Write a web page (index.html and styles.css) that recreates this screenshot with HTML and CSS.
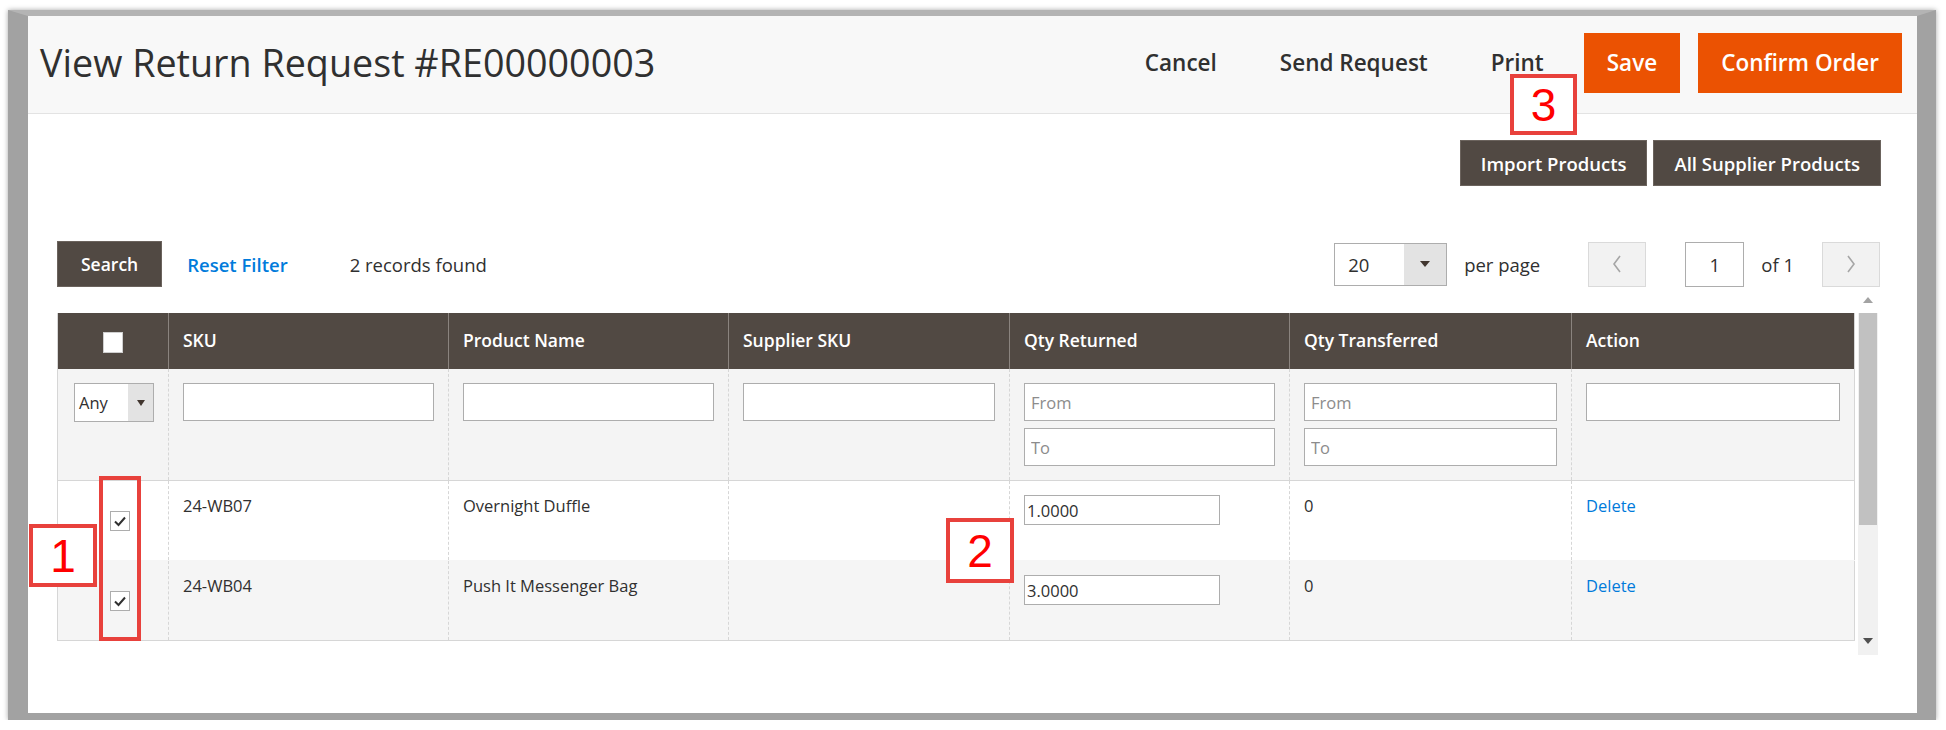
FILE: index.html
```html
<!DOCTYPE html>
<html lang="en">
<head>
<meta charset="utf-8">
<title>View Return Request</title>
<link rel="stylesheet" href="styles.css">
</head>
<body>
<div class="frame">
  <div class="page">
    <header class="page-header">
      <h1 class="page-title">View Return Request #RE00000003</h1>
      <div class="page-actions">
        <button class="act-link">Cancel</button>
        <button class="act-link">Send Request</button>
        <button class="act-link">Print</button>
        <button class="act-primary save">Save</button>
        <button class="act-primary confirm">Confirm Order</button>
      </div>
    </header>

    <div class="content">
      <div class="top-actions">
        <button class="act-dark">Import Products</button>
        <button class="act-dark">All Supplier Products</button>
      </div>

      <div class="grid-toolbar">
        <div class="toolbar-left">
          <button class="act-dark search">Search</button>
          <a class="reset-link">Reset Filter</a>
          <span class="records">2 records found</span>
        </div>
        <div class="pager">
          <div class="per-page-select"><span class="sel-val">20</span><span class="sel-btn"><i class="tri-down"></i></span></div>
          <span class="pager-label">per page</span>
          <button class="pager-btn prev"><svg width="12" height="20" viewBox="0 0 12 20"><polyline points="9,2 3,10 9,18" fill="none" stroke="#a6a6a6" stroke-width="1.6"/></svg></button>
          <div class="page-input">1</div>
          <span class="pager-label of">of 1</span>
          <button class="pager-btn next"><svg width="12" height="20" viewBox="0 0 12 20"><polyline points="3,2 9,10 3,18" fill="none" stroke="#a6a6a6" stroke-width="1.6"/></svg></button>
        </div>
      </div>

      <div class="grid-scroll">
        <div class="grid-wrap">
          <table class="grid">
            <colgroup>
              <col class="c-cb"><col class="c-std"><col class="c-std"><col class="c-w281"><col class="c-std"><col class="c-w282"><col class="c-w283">
            </colgroup>
            <thead>
              <tr class="head-row">
                <th class="th-cb"><span class="head-check"></span></th>
                <th>SKU</th>
                <th>Product Name</th>
                <th>Supplier SKU</th>
                <th>Qty Returned</th>
                <th>Qty Transferred</th>
                <th>Action</th>
              </tr>
              <tr class="filter-row">
                <td class="f-cb"><div class="any-select"><span class="sel-val">Any</span><span class="sel-btn"><i class="tri-down"></i></span></div></td>
                <td><input class="f-input" type="text"></td>
                <td><input class="f-input" type="text"></td>
                <td><input class="f-input" type="text"></td>
                <td><input class="f-input" type="text" placeholder="From"><input class="f-input to" type="text" placeholder="To"></td>
                <td><input class="f-input" type="text" placeholder="From"><input class="f-input to" type="text" placeholder="To"></td>
                <td><input class="f-input" type="text"></td>
              </tr>
            </thead>
            <tbody>
              <tr class="data-row">
                <td class="d-cb"><span class="row-check"><svg width="18" height="18" viewBox="0 0 18 18"><polyline points="4,9.5 7.5,13 14,5.5" fill="none" stroke="#303030" stroke-width="2"/></svg></span></td>
                <td>24-WB07</td>
                <td>Overnight Duffle</td>
                <td></td>
                <td><input class="qty-input" type="text" value="1.0000"></td>
                <td>0</td>
                <td><a class="del-link">Delete</a></td>
              </tr>
              <tr class="data-row alt">
                <td class="d-cb"><span class="row-check"><svg width="18" height="18" viewBox="0 0 18 18"><polyline points="4,9.5 7.5,13 14,5.5" fill="none" stroke="#303030" stroke-width="2"/></svg></span></td>
                <td>24-WB04</td>
                <td>Push It Messenger Bag</td>
                <td></td>
                <td><input class="qty-input" type="text" value="3.0000"></td>
                <td>0</td>
                <td><a class="del-link">Delete</a></td>
              </tr>
            </tbody>
          </table>
        </div>
        <div class="vscroll">
          <div class="sb-top"><i class="tri-up"></i></div>
          <div class="sb-thumb"></div>
          <div class="sb-rest"><i class="tri-down dark"></i></div>
        </div>
      </div>
    </div>

    <div class="note note-3">3</div>
    <div class="note note-2">2</div>
    <div class="note note-1">1</div>
    <div class="note note-tall"></div>
  </div>
</div>
</body>
</html>
```
FILE: styles.css
```css
* { box-sizing: border-box; }

body {
  margin: 0;
  background: #ffffff;
  font-family: "Open Sans", "DejaVu Sans", sans-serif;
  color: #303030;
}

.frame {
  margin: 10px 0 0 8px;
  width: 1928px;
  height: 710px;
  border-style: solid;
  border-color: #a2a2a2;
  border-top-color: #b4b4b4;
  border-width: 6px 19px 7px 20px;
  box-shadow: 0 0 5px rgba(0, 0, 0, 0.35);
}

.page {
  position: relative;
  height: 100%;
  background: #ffffff;
}

/* ---------- header ---------- */
.page-header {
  height: 98px;
  display: flex;
  align-items: center;
  justify-content: space-between;
  padding: 0 15px 4px 12px;
  background: #f8f8f8;
  border-bottom: 1px solid #e3e3e3;
}

.page-title {
  margin: 0;
  font-size: 37.7px;
  font-weight: 400;
  line-height: 1.2;
  color: #303030;
}

.page-actions {
  display: flex;
  align-items: center;
}

.act-link {
  font-family: "Open Sans", sans-serif;
  font-size: 22.5px;
  font-weight: 600;
  color: #303030;
  background: none;
  border: 0;
  padding: 0;
}

.act-link + .act-link { margin-left: 63px; }

.act-primary {
  height: 60px;
  padding: 0 22px;
  font-family: "Open Sans", sans-serif;
  font-size: 22.5px;
  font-weight: 600;
  color: #ffffff;
  background: #eb5202;
  border: 1px solid #eb5202;
}

.save { margin-left: 40px; padding: 0 22px; }
.confirm { margin-left: 18px; }

/* ---------- content ---------- */
.content {
  padding: 0 36px 0 29px;
}

.top-actions {
  display: flex;
  justify-content: flex-end;
  gap: 6px;
  margin-top: 26px;
}

.act-dark {
  height: 46px;
  padding: 0 20px;
  font-family: "Open Sans", sans-serif;
  font-size: 18.5px;
  font-weight: 600;
  color: #ffffff;
  background: #514943;
  border: 1px solid #6b635d;
}

/* ---------- toolbar ---------- */
.grid-toolbar {
  display: flex;
  justify-content: space-between;
  align-items: center;
  height: 46px;
  margin-top: 55px;
}

.toolbar-left {
  display: flex;
  align-items: center;
  font-size: 18.5px;
}

.act-dark.search { padding: 0 23px; font-size: 17.5px; }

.reset-link {
  margin-left: 25px;
  color: #007bdb;
  font-weight: 600;
}

.records { margin-left: 62px; }

.pager {
  display: flex;
  align-items: center;
  font-size: 18.5px;
  margin-right: 1px;
}

.per-page-select {
  display: flex;
  width: 113px;
  height: 43px;
  border: 1px solid #adadad;
  background: #ffffff;
}

.sel-val {
  flex: 1;
  display: flex;
  align-items: center;
  padding-left: 13px;
}

.sel-btn {
  width: 42px;
  display: flex;
  align-items: center;
  justify-content: center;
  background: #e3e3e3;
}

.tri-down {
  display: block;
  width: 0;
  height: 0;
  border-left: 5px solid transparent;
  border-right: 5px solid transparent;
  border-top: 6px solid #41362f;
}

.tri-up {
  display: block;
  width: 0;
  height: 0;
  border-left: 5px solid transparent;
  border-right: 5px solid transparent;
  border-bottom: 6px solid #a3a3a3;
}

.pager-label { margin-left: 17px; }

.pager-btn {
  width: 58px;
  height: 45px;
  display: flex;
  align-items: center;
  justify-content: center;
  background: #f2f2f2;
  border: 1px solid #dadada;
  padding: 0;
}

.prev { margin-left: 48px; }
.next { margin-left: 28px; }

.page-input {
  width: 59px;
  height: 45px;
  margin-left: 39px;
  border: 1px solid #adadad;
  background: #ffffff;
  display: flex;
  align-items: center;
  justify-content: center;
}

/* ---------- grid ---------- */
.grid-scroll {
  display: flex;
  height: 363px;
  margin-top: 5px;
}

.grid-wrap {
  width: 1797px;
  padding-top: 21px;
}

.grid {
  width: 1797px;
  table-layout: fixed;
  border-collapse: collapse;
  font-size: 16.5px;
  color: #303030;
  border-left: 1px solid #d6d6d6;
  border-right: 1px solid #d6d6d6;
  border-bottom: 1px solid #d6d6d6;
}

.c-cb { width: 111px; }
.c-std { width: 280px; }
.c-w281 { width: 281px; }
.c-w282 { width: 282px; }
.c-w283 { width: 283px; }

.head-row { height: 56px; }

.head-row th {
  background: #514943;
  color: #ffffff;
  font-size: 17.5px;
  font-weight: 600;
  text-align: left;
  padding: 0 14px 2px;
  border-left: 1px solid #8a837e;
  vertical-align: middle;
}

.head-row th.th-cb {
  text-align: center;
  padding: 0;
  border-left: 0;
}

.head-check {
  display: inline-block;
  width: 20px;
  height: 21px;
  background: #ffffff;
  border: 1px solid #cfcfcf;
  vertical-align: middle;
}

.filter-row { height: 111px; }

.filter-row td {
  background: #f4f4f4;
  padding: 14px;
  vertical-align: top;
  border-left: 1px dashed #d6d6d6;
}

.filter-row td.f-cb {
  padding: 14px 0 0 16px;
  border-left: 0;
}

.any-select {
  display: flex;
  width: 80px;
  height: 39px;
  border: 1px solid #adadad;
  background: #ffffff;
  font-size: 16.5px;
}

.any-select .sel-val { padding-left: 4px; }
.any-select .sel-btn { width: 25px; }
.any-select .tri-down { border-left-width: 4px; border-right-width: 4px; border-top-width: 6px; }

.f-input {
  display: block;
  width: 100%;
  height: 38px;
  margin: 0;
  padding: 0 6px;
  border: 1px solid #adadad;
  background: #ffffff;
  font-family: "Open Sans", sans-serif;
  font-size: 16.5px;
  color: #303030;
}

.f-input::placeholder { color: #8c8c8c; }
.f-input.to { margin-top: 7px; }

.data-row { height: 80px; }

.data-row td {
  padding: 13px 14px 0;
  vertical-align: top;
  line-height: 24px;
  background: #ffffff;
  border-top: 1px solid #d6d6d6;
  border-left: 1px dashed #d6d6d6;
}

.data-row.alt td { background: #f5f5f5; border-top-color: #f5f5f5; }

.data-row td.d-cb {
  padding: 0 0 0 52px;
  vertical-align: middle;
  border-left: 0;
}

.row-check {
  display: flex;
  align-items: center;
  justify-content: center;
  width: 20px;
  height: 20px;
  background: #ffffff;
  border: 1px solid #adadad;
}

.qty-input {
  display: block;
  width: 196px;
  height: 30px;
  margin: 1px 0 0;
  padding: 0 2px;
  border: 1px solid #adadad;
  background: #ffffff;
  font-family: "Open Sans", sans-serif;
  font-size: 16.5px;
  color: #303030;
}

.del-link { color: #007bdb; }

/* ---------- fake scrollbar ---------- */
.vscroll {
  width: 20px;
  margin-left: 4px;
  display: flex;
  flex-direction: column;
}

.sb-top {
  height: 21px;
  display: flex;
  justify-content: center;
  padding-top: 5px;
  background: #ffffff;
}

.sb-thumb {
  height: 212px;
  background: #c1c1c1;
  border-left: 1px solid #f1f1f1;
  border-right: 1px solid #f1f1f1;
}

.sb-rest {
  flex: 1;
  display: flex;
  justify-content: center;
  align-items: flex-end;
  padding-bottom: 11px;
  background: #f1f1f1;
}

.tri-down.dark { border-top-color: #505050; }

/* ---------- annotations ---------- */
.note {
  position: absolute;
  display: flex;
  align-items: center;
  justify-content: center;
  border: 4px solid #e8413c;
  background: #ffffff;
  color: #ff0000;
  font-family: "Liberation Sans", Arial, sans-serif;
  font-size: 46px;
  line-height: 1;
}

.note-3 { left: 1482px; top: 58px; width: 67px; height: 61px; }
.note-2 { left: 918px; top: 502px; width: 68px; height: 65px; }
.note-1 { left: 1px; top: 508px; width: 68px; height: 63px; }
.note-tall { left: 71px; top: 460px; width: 42px; height: 165px; background: transparent; }
```
